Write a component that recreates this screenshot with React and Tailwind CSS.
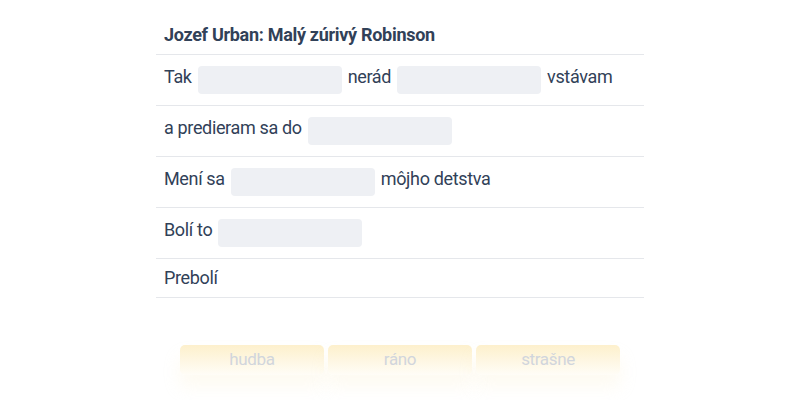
const ROWS = [
  ['Tak', null, 'nerád', null, 'vstávam'],
  ['a predieram sa do', null],
  ['Mení sa', null, 'môjho detstva'],
  ['Bolí to', null],
  ['Prebolí'],
];

const WORDS = ['hudba', 'ráno', 'strašne'];

const Blank = () => (
  <span className="mx-[6px] my-1 inline-block h-7 w-36 rounded-[4px] bg-[#eef0f4] align-[-15px]" />
);

const Row = ({ parts }) => (
  <div className="border-b border-gray-200 px-2 py-[7px] text-[18px] leading-6 tracking-[-0.35px] text-slate-700">
    {parts.map((p, i) => (p === null ? <Blank key={i} /> : <span key={i}>{p}</span>))}
  </div>
);

export default function App() {
  return (
    <div className="min-h-[400px] bg-white" style={{ fontFamily: 'Roboto, "Noto Sans", sans-serif' }}>
      <div className="mx-auto w-[488px]">
        <h1 className="border-b border-gray-200 px-2 pt-[21px] pb-[5px] text-[18px] font-bold leading-7 tracking-[-0.3px] text-slate-700">
          Jozef Urban: Malý zúrivý Robinson
        </h1>
        {ROWS.map((parts, i) => (
          <Row key={i} parts={parts} />
        ))}
      </div>
      <div className="mt-[47px] flex justify-center gap-1">
        {WORDS.map((w) => (
          <div
            key={w}
            className="flex h-[30px] w-36 items-center justify-center rounded-[5px] bg-gradient-to-b from-[#fdf0cc] to-[#fffdf7] text-[17px] tracking-[-0.35px] text-gray-300 shadow-[0_12px_16px_rgba(253,240,204,0.25)]"
          >
            {w}
          </div>
        ))}
      </div>
    </div>
  );
}
